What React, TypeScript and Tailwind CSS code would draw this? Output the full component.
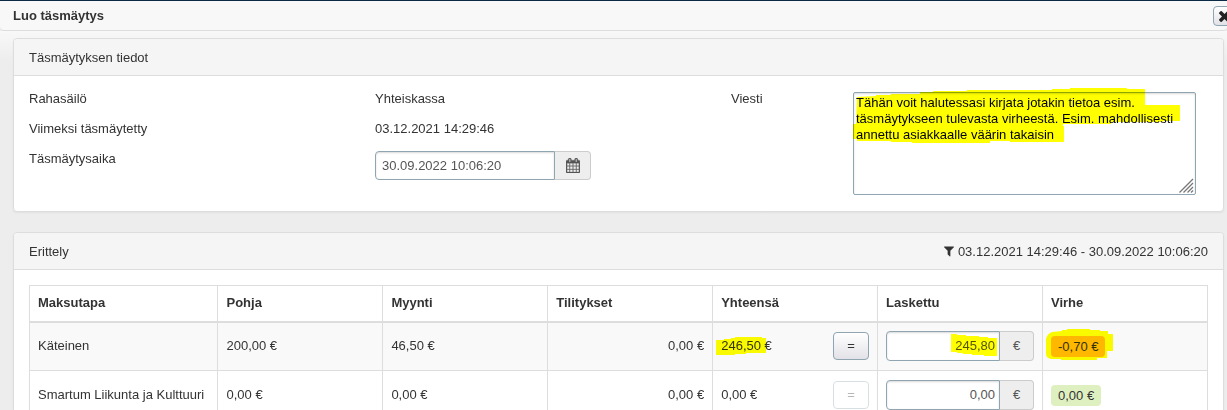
import type { ReactNode } from "react";

type PaymentRow = {
  id: string;
  name: string;
  base: string;
  sales: string;
  settlements: string;
  total: string;
  counted: string;
  error: string;
  isMatched: boolean;
};

const rows: PaymentRow[] = [
  {
    id: "cash",
    name: "Käteinen",
    base: "200,00 €",
    sales: "46,50 €",
    settlements: "0,00 €",
    total: "246,50 €",
    counted: "245,80",
    error: "-0,70 €",
    isMatched: false,
  },
  {
    id: "smartum",
    name: "Smartum Liikunta ja Kulttuuri",
    base: "0,00 €",
    sales: "0,00 €",
    settlements: "0,00 €",
    total: "0,00 €",
    counted: "0,00",
    error: "0,00 €",
    isMatched: true,
  },
];

const message =
  "Tähän voit halutessasi kirjata jotakin tietoa esim.\ntäsmäytykseen tulevasta virheestä. Esim. mahdollisesti\nannettu asiakkaalle väärin takaisin";

const CloseIcon = () => (
  <svg width="11" height="11" viewBox="110 366 1188 1188" fill="currentColor" className="shrink-0" aria-hidden="true">
    <path d="M1298 1322q0 40-28 68l-136 136q-28 28-68 28t-68-28l-294-294-294 294q-28 28-68 28t-68-28l-136-136q-28-28-28-68t28-68l294-294-294-294q-28-28-28-68t28-68l136-136q28-28 68-28t68 28l294 294 294-294q28-28 68-28t68 28l136 136q28 28 28 68t-28 68l-294 294 294 294q28 28 28 68z" />
  </svg>
);

const CalendarIcon = () => (
  <svg width="14" height="15" viewBox="0 0 1664 1792" fill="currentColor" aria-hidden="true">
    <path d="M128 1664h288v-288h-288v288zm352 0h320v-288h-320v288zm-352-352h288v-320h-288v320zm352 0h320v-320h-320v320zm-352-384h288v-288h-288v288zm736 736h320v-288h-320v288zm-384-736h320v-288h-320v288zm768 736h288v-288h-288v288zm-384-352h320v-320h-320v320zm-352-864v-288q0-13-9.5-22.5t-22.5-9.5h-64q-13 0-22.5 9.5t-9.5 22.5v288q0 13 9.5 22.5t22.5 9.5h64q13 0 22.5-9.5t9.5-22.5zm736 864h288v-320h-288v320zm-384-384h320v-288h-320v288zm384 0h288v-288h-288v288zm32-480v-288q0-13-9.5-22.5t-22.5-9.5h-64q-13 0-22.5 9.5t-9.5 22.5v288q0 13 9.5 22.5t22.5 9.5h64q13 0 22.5-9.5t9.5-22.5zm384-64v1280q0 52-38 90t-90 38h-1408q-52 0-90-38t-38-90v-1280q0-52 38-90t90-38h128v-96q0-66 47-113t113-47h64q66 0 113 47t47 113v96h384v-96q0-66 47-113t113-47h64q66 0 113 47t47 113v96h128q52 0 90 38t38 90z" stroke="currentColor" strokeWidth="30" />
  </svg>
);

const FilterIcon = () => (
  <svg width="10" height="11" viewBox="0 0 1408 1408" fill="currentColor" aria-hidden="true">
    <path d="M1403 39q17 41-14 70l-493 493v742q0 42-39 59-13 5-25 5-27 0-45-19l-256-256q-19-19-19-45v-486l-493-493q-31-29-14-70 17-39 59-39h1280q42 0 59 39z" />
  </svg>
);

const ResizeGrip = () => (
  <svg width="15" height="15" viewBox="0 0 15 15" fill="none" className="pointer-events-none absolute right-[2px] bottom-[2px]" aria-hidden="true">
    <path d="M0.5 14.5L14 1M4.5 14.5L14 5M8.5 14.5L14 9M12 14.5L14 12.5" stroke="#777" strokeWidth="1.3" />
  </svg>
);

type MarkerProps = {
  width: number;
  height: number;
  d: string;
  className: string;
};

// Highlighter stroke laid over the text
function Marker({ width, height, d, className }: MarkerProps) {
  return (
    <svg
      width={width}
      height={height}
      viewBox={`0 0 ${width} ${height}`}
      className={`pointer-events-none absolute max-w-none mix-blend-multiply ${className}`}
      aria-hidden="true"
    >
      <path d={d} fill="#ffff00" />
    </svg>
  );
}

type PanelProps = {
  title: string;
  aside?: ReactNode;
  children: ReactNode;
};

function Panel({ title, aside, children }: PanelProps) {
  return (
    <section className="rounded border border-[#dddddd] bg-white shadow-xs">
      <div className="flex h-[37px] items-center justify-between rounded-t border-b border-[#dddddd] bg-[#f5f5f5] px-[15px] pt-px">
        <h2>{title}</h2>
        {aside}
      </div>
      {children}
    </section>
  );
}

const inputClass =
  "min-w-0 flex-1 rounded-l border border-[#8fa5b2] bg-white text-[#555555] shadow-[inset_0_1px_2px_rgba(0,0,0,0.15)] outline-none";
const addonClass =
  "flex shrink-0 items-center justify-center rounded-r border border-l-0 border-[#cccccc] bg-[#eeeeee] text-[#555555]";
const cellClass = "border border-[#dddddd] px-2";

function DetailsPanel() {
  return (
    <Panel title="Täsmäytyksen tiedot">
      <div className="grid grid-cols-[702fr_477fr] px-[15px] pt-2 pb-4">
        <div className="grid auto-rows-[30px] grid-cols-[346fr_356fr] leading-[30px]">
          <span>Rahasäilö</span>
          <span>Yhteiskassa</span>
          <span>Viimeksi täsmäytetty</span>
          <span>03.12.2021 14:29:46</span>
          <label htmlFor="time">Täsmäytysaika</label>
          <div className="flex h-9 w-[216px] pt-[7px]">
            <input id="time" type="text" defaultValue="30.09.2022 10:06:20" className={`px-1.5 ${inputClass}`} />
            <button type="button" aria-label="Valitse aika" className={`w-9 ${addonClass}`}>
              <CalendarIcon />
            </button>
          </div>
        </div>
        <div className="grid grid-cols-[122fr_355fr]">
          <label htmlFor="message" className="leading-[30px]">
            Viesti
          </label>
          <div className="relative mt-2 mr-3">
            <textarea
              id="message"
              defaultValue={message}
              className="block h-[103px] w-full resize-none overflow-hidden rounded-xs border border-[#8fa5b2] bg-white p-0.5 leading-4 text-black shadow-[inset_0_1px_2px_rgba(0,0,0,0.15)] outline-none"
            />
            <Marker
              width={330}
              height={56}
              className="-top-1 -left-0.5"
              d="M6 9L25 8V7H40V6H69V4H82V3H116V2H201V1H219V0H276V1H294V17H329V33H312V34H260V36H212V38H213V54H159V53H139V55H61V54H40V53H6V51H2V36H5Z"
            />
            <ResizeGrip />
          </div>
        </div>
      </div>
    </Panel>
  );
}

function PaymentTableRow({ row }: { row: PaymentRow }) {
  return (
    <tr className="h-[49px] odd:bg-[#f9f9f9]">
      <td className={`whitespace-nowrap ${cellClass}`}>{row.name}</td>
      <td className={cellClass}>{row.base}</td>
      <td className={cellClass}>{row.sales}</td>
      <td className={`text-right ${cellClass}`}>{row.settlements}</td>
      <td className={cellClass}>
        <div className="flex items-center justify-between">
          <span className="relative">
            {row.total}
            {!row.isMatched && (
              <Marker width={50} height={20} className="-top-px -left-[5px]" d="M0 4H8V3H15V2H19V1H46V2H50V17H30V18H19V19H0Z" />
            )}
          </span>
          <button
            type="button"
            disabled={row.isMatched}
            className="h-7 w-9 rounded border border-[#8fa5b2] bg-linear-to-b from-white to-[#e2e1e7] disabled:bg-none disabled:opacity-35"
          >
            =
          </button>
        </div>
      </td>
      <td className={cellClass}>
        <div className="relative flex h-[30px]">
          <input
            type="text"
            aria-label={`Laskettu ${row.name}`}
            defaultValue={row.counted}
            className={`px-1 text-right ${inputClass}`}
          />
          <span className={`w-[34px] ${addonClass}`}>€</span>
          {!row.isMatched && (
            <Marker width={46} height={22} className="top-[3px] right-[37px]" d="M0 0H6V1H15V2H28V3H37V4H46V22H33V21H21V20H12V19H6V18H0Z" />
          )}
        </div>
      </td>
      <td className={cellClass}>
        <span
          className={`relative inline-block rounded px-[7px] leading-[21px] ${row.isMatched ? "bg-[#dff0c0]" : "bg-[#ffb700]"}`}
        >
          {row.error}
          {!row.isMatched && (
            <Marker
              width={67}
              height={32}
              className="-top-[7px] -left-[5px]"
              d="M6 3L16 2V1H21V0H44V1H54V2H62V5H67V22H61V29H51V31H15V30H5Q0 29 0 25V10Q1 5 6 3Z"
            />
          )}
        </span>
      </td>
    </tr>
  );
}

function BreakdownPanel() {
  return (
    <Panel
      title="Erittely"
      aside={
        <span className="flex items-center gap-1">
          <FilterIcon />
          03.12.2021 14:29:46 - 30.09.2022 10:06:20
        </span>
      }
    >
      <div className="p-[15px]">
        <table className="w-full table-fixed border-collapse">
          <thead>
            <tr className="h-9 text-left">
              <th className={`w-[16%] border-b-2 ${cellClass}`}>Maksutapa</th>
              <th className={`w-[14%] border-b-2 ${cellClass}`}>Pohja</th>
              <th className={`w-[14%] border-b-2 ${cellClass}`}>Myynti</th>
              <th className={`w-[14%] border-b-2 ${cellClass}`}>Tilitykset</th>
              <th className={`w-[14%] border-b-2 ${cellClass}`}>Yhteensä</th>
              <th className={`w-[14%] border-b-2 ${cellClass}`}>Laskettu</th>
              <th className={`w-[14%] border-b-2 ${cellClass}`}>Virhe</th>
            </tr>
          </thead>
          <tbody>
            {rows.map((row) => (
              <PaymentTableRow key={row.id} row={row} />
            ))}
          </tbody>
        </table>
      </div>
    </Panel>
  );
}

export default function App() {
  return (
    <div className="h-screen overflow-hidden border-t border-[#0b2a45] bg-[#ededed] font-['Liberation_Sans',Arial,sans-serif] text-[13px] leading-[18px] text-[#333333]">
      <header className="flex h-[30px] items-center justify-between rounded-b border-b border-[#dddddd] bg-[#f8f8f8] pt-px pl-[13px]">
        <h1 className="font-bold">Luo täsmäytys</h1>
        <button
          type="button"
          aria-label="Sulje"
          className="-mr-2 flex h-5 w-[22px] shrink-0 items-center justify-center rounded border border-[#8fa5b2] bg-linear-to-b from-white to-[#e2e1e7] text-[#222222]"
        >
          <CloseIcon />
        </button>
      </header>
      <main className="flex flex-col gap-5 bg-linear-to-b from-[#f8f8f8] to-[#ededed] to-[30px] pt-[7px] pr-[3px] pb-5 pl-[13px]">
        <DetailsPanel />
        <BreakdownPanel />
      </main>
    </div>
  );
}
